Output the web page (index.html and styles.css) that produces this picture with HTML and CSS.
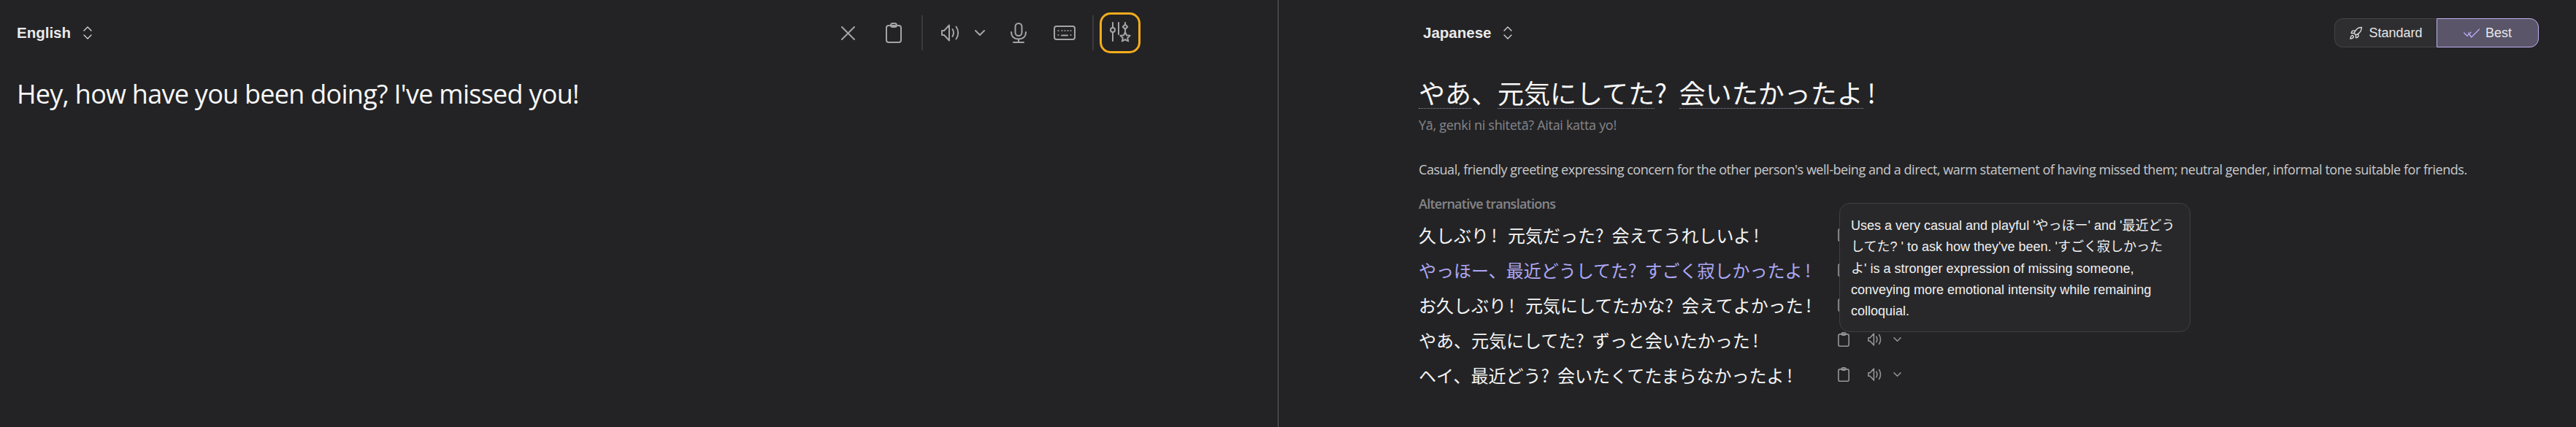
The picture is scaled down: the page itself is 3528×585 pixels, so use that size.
FILE: index.html
```html
<!DOCTYPE html>
<html lang="en">
<head>
<meta charset="utf-8">
<title>Translator</title>
<link rel="stylesheet" href="styles.css">
</head>
<body>
<svg class="sprite" aria-hidden="true">
  <symbol id="updown" viewBox="0 0 12 18"><path d="M1 6l5-5 5 5M1 12l5 5 5-5"/></symbol>
  <symbol id="clip" viewBox="0 0 22 28"><rect x="1" y="4" width="20" height="23" rx="3"/><rect x="7" y="1" width="8" height="5" rx="2.5"/></symbol>
  <symbol id="speaker" viewBox="0 0 25 24"><path d="M1 9v6h3l7 7.500V1.500L4 9H1zM15.500 7c1.800 3 1.800 7 0 10M20.500 3.500c3.600 5 3.600 12 0 17"/></symbol>
  <symbol id="chev" viewBox="0 0 14 8"><path d="M1 1l6 6 6-6"/></symbol>
</svg>
<main class="app">
  <section class="source">
    <header class="source-head">
      <button class="lang">English<svg class="ud"><use href="#updown"/></svg></button>
      <div class="tools">
        <svg class="i i-x" viewBox="0 0 19 19"><path d="M1 1l17 17M18 1L1 18"/></svg>
        <svg class="i i-clip"><use href="#clip"/></svg>
        <span class="vr"></span>
        <svg class="i i-speak"><use href="#speaker"/></svg>
        <svg class="i i-chev"><use href="#chev"/></svg>
        <svg class="i i-mic" viewBox="0 0 22 28"><rect x="6.500" y="1" width="9" height="17" rx="4.500"/><path d="M1 13c0 6 4 9.500 10 9.500S21 19 21 13M11 22.500V27M4 27h14"/></svg>
        <svg class="i i-key" viewBox="0 0 30 20"><rect x="1" y="1" width="28" height="18" rx="3"/><path class="dots" d="M6 7h1M11 7h1M15 7h1M19 7h1M23 7h1M6 13h1M23 13h1"/><path d="M11 13.500h8"/></svg>
        <span class="vr vr-2"></span>
        <button class="tune">
          <svg viewBox="0 0 30 30"><path d="M5 1v7M5 14v12"/><circle cx="5" cy="11" r="3"/><path d="M13 1v16"/><path d="M22 1v2.500M22 10v3"/><path d="M22 3.500l3.200 3.200L22 10l-3.200-3.300z"/><path d="M22 14l2 4.300 4.600.5-3.400 3.100 1 4.600-4.200-2.400-4.200 2.400 1-4.600-3.400-3.100 4.600-.5z"/></svg>
        </button>
      </div>
    </header>
    <p class="source-text">Hey, how have you been doing? I've missed you!</p>
  </section>

  <section class="target">
    <header class="target-head">
      <button class="lang">Japanese<svg class="ud"><use href="#updown"/></svg></button>
      <div class="mode">
        <button class="mode-btn std">
          <svg viewBox="0 0 24 24"><path d="M4.500 16.500c-1.500 1.260-2 5-2 5s3.740-.5 5-2c.71-.84.7-2.130-.09-2.910a2.180 2.180 0 0 0-2.910-.09z"/><path d="M12 15l-3-3a22 22 0 0 1 2-3.950A12.880 12.880 0 0 1 22 2c0 2.720-.78 7.500-6 11a22.350 22.350 0 0 1-4 2z"/><path d="M9 12H4s.55-3.030 2-4c1.620-1.080 5 0 5 0"/><path d="M12 15v5s3.030-.55 4-2c1.080-1.620 0-5 0-5"/></svg>
          Standard
        </button>
        <button class="mode-btn best">
          <svg viewBox="0 0 22 13"><path d="M.7 6l4.300 4.300 5-5M6.700 6l4 6L21.700 1"/></svg>
          Best
        </button>
      </div>
    </header>
    <h1 class="title ja"><span class="u">やあ</span>、<span class="u">元気にしてた</span>? <span class="u">会いたかったよ</span><span class="bang">!</span></h1>
    <p class="roman">Yā, genki ni shitetā? Aitai katta yo!</p>
    <p class="desc">Casual, friendly greeting expressing concern for the other person's well-being and a direct, warm statement of having missed them; neutral gender, informal tone suitable for friends.</p>
    <h2 class="alt-label">Alternative translations</h2>
    <div class="alts">
      <div class="tip">Uses a very casual and playful 'やっほー' and '最近どうしてた? ' to ask how they've been. 'すごく寂しかったよ' is a stronger expression of missing someone, conveying more emotional intensity while remaining colloquial.</div>
      <div class="alt"><span class="alt-text ja">久しぶり<span class="bang">!</span> 元気だった? 会えてうれしいよ<span class="bang">!</span></span><svg class="i r-clip"><use href="#clip"/></svg><svg class="i r-speak"><use href="#speaker"/></svg><svg class="i r-chev"><use href="#chev"/></svg></div>
      <div class="alt active"><span class="alt-text ja">やっほー、最近どうしてた? すごく寂しかったよ<span class="bang">!</span></span><svg class="i r-clip"><use href="#clip"/></svg><svg class="i r-speak"><use href="#speaker"/></svg><svg class="i r-chev"><use href="#chev"/></svg></div>
      <div class="alt"><span class="alt-text ja">お久しぶり<span class="bang">!</span> 元気にしてたかな? 会えてよかった<span class="bang">!</span></span><svg class="i r-clip"><use href="#clip"/></svg><svg class="i r-speak"><use href="#speaker"/></svg><svg class="i r-chev"><use href="#chev"/></svg></div>
      <div class="alt"><span class="alt-text ja">やあ、元気にしてた? ずっと会いたかった<span class="bang">!</span></span><svg class="i r-clip"><use href="#clip"/></svg><svg class="i r-speak"><use href="#speaker"/></svg><svg class="i r-chev"><use href="#chev"/></svg></div>
      <div class="alt"><span class="alt-text ja">ヘイ、最近どう? 会いたくてたまらなかったよ<span class="bang">!</span></span><svg class="i r-clip"><use href="#clip"/></svg><svg class="i r-speak"><use href="#speaker"/></svg><svg class="i r-chev"><use href="#chev"/></svg></div>
    </div>
  </section>
</main>
</body>
</html>
```
FILE: styles.css
```css
* { box-sizing: border-box; }
html, body { margin: 0; height: 100%; overflow: hidden; }
body {
  background: #232325;
  color: #f5f5f5;
  font-family: "Open Sans", "Noto Sans CJK JP", sans-serif;
}
.sprite { display: none; }
button { background: none; border: 0; padding: 0; color: inherit; font: inherit; }
svg { fill: none; stroke: currentColor; stroke-linecap: round; stroke-linejoin: round; }

.app { display: grid; grid-template-columns: 1751px 1fr; height: 585px; }

.source { border-right: 1px solid #5f5f62; padding-left: 23px; }
.source-head { display: flex; align-items: center; height: 56px; margin-top: 17px; padding-right: 188px; justify-content: space-between; }

.lang {
  display: flex; align-items: center; gap: 17px;
  font-family: "Liberation Sans", Arial, sans-serif;
  font-weight: 700; font-size: 20.500px; color: #e9e9ea;
}
.ud { width: 12px; height: 18px; stroke: #d8d8da; stroke-width: 1.300; }

.tools { display: flex; align-items: center; color: #a4a4a6; }
.i { display: block; flex: none; stroke-width: 2; }
.i-x { width: 19px; height: 19px; margin-right: 42px; }
.i-clip { width: 22px; height: 28px; margin-right: 27px; }
.vr { width: 2px; height: 48px; background: #3a3a3c; margin-right: 25px; }
.vr-2 { margin: 0 8px 0 23px; }
.i-speak { width: 25px; height: 24px; margin-right: 21px; }
.i-chev { width: 14px; height: 8px; margin-right: 35px; }
.i-mic { width: 22px; height: 28px; margin-right: 37px; }
.i-key { width: 30px; height: 20px; }
.dots { stroke-width: 1.500; }
.tune {
  display: flex; align-items: center; justify-content: center;
  width: 56px; height: 56px;
  border: 3px solid #f5ac1b; border-radius: 15px; color: #a4a4a6;
}
.tune svg { width: 30px; height: 30px; stroke-width: 2; }

.source-text { margin: 29px 0 0; font-size: 36px; line-height: 54px; font-weight: 400; letter-spacing: -.73px; color: #f7f7f7; }

.target { padding: 0 51px 0 192px; }
.target-head { display: flex; align-items: center; justify-content: space-between; height: 56px; margin-top: 17px; padding-left: 6px; }

.mode { display: flex; font-family: "Liberation Sans", Arial, sans-serif; font-size: 18px; color: #e6e6e8; }
.mode-btn { display: flex; align-items: center; justify-content: center; height: 40px; width: 140px; gap: 8px; }
.mode-btn svg { flex: none; }
.std { background: #2e2e30; border: 1px solid #434345; border-right: 0; border-radius: 12px 0 0 12px; }
.std svg { width: 19px; height: 19px; stroke-width: 1.800; color: #d6d6d8; }
.best { background: #5a5568; border: 1.500px solid #bdb0f2; border-radius: 0 12px 12px 0; }
.best svg { width: 22px; height: 13px; stroke-width: 1.500; color: #b3a6ec; }

.ja { font-family: "Noto Sans CJK JP", sans-serif; word-spacing: .24em; }
.bang { padding: 0 .15em; }
.title { margin: 29px 0 0; font-size: 36px; font-weight: 400; line-height: 48px; color: #f7f7f7; }
.u { border-bottom: 1px dotted #8c8aa2; display: inline-block; line-height: 44px; height: 45px; }
.roman { margin: 8px 0 0; font-size: 18px; line-height: 27px; color: #85858a; letter-spacing: -.3px; }
.desc { margin: 34px 0 0; font-size: 18px; line-height: 27px; color: #c9c9cc; letter-spacing: -.46px; white-space: nowrap; }
.alt-label { margin: 20px 0 0; font-size: 18px; line-height: 27px; font-weight: 600; color: #85858a; letter-spacing: -.75px; }

.alts { position: relative; margin-top: 4px; }
.alt { display: flex; align-items: center; height: 48px; }
.alt-text { width: 574px; font-size: 24px; white-space: nowrap; }
.active .alt-text { color: #ada7f5; }
.alt .i { color: #98989a; }
.r-clip { width: 16px; height: 20px; stroke-width: 2.200; margin-right: 24px; }
.r-speak { width: 21px; height: 18px; stroke-width: 2; margin-right: 15px; }
.r-chev { width: 11px; height: 6px; stroke-width: 2; }
.tip {
  position: absolute; z-index: 1; left: 576px; top: -19px; width: 481px; height: 177px;
  padding: 16px 19px 0 15px;
  background: #28282a; border: 1px solid #3f3f42; border-radius: 14px;
  font-family: "Liberation Sans", Arial, "Noto Sans CJK JP", sans-serif;
  font-size: 18px; line-height: 29.250px; color: #f0f0f1;
}
```
